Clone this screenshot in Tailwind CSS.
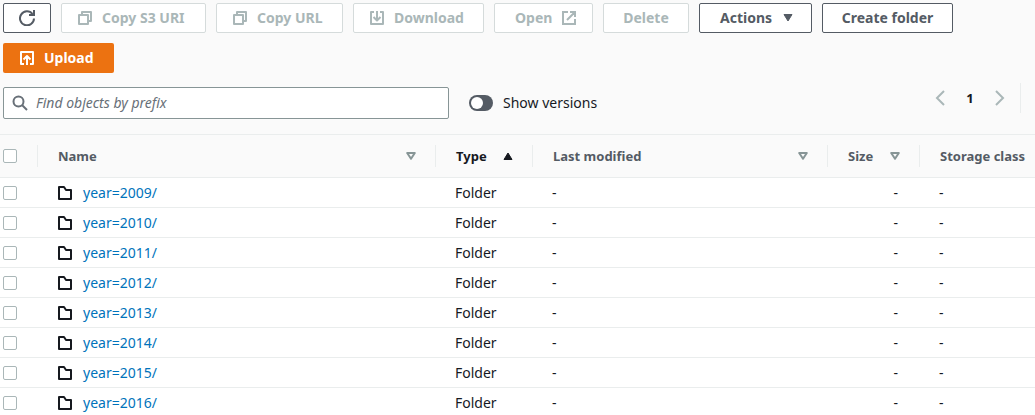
<!DOCTYPE html>
<html lang="en">
<head>
<meta charset="utf-8">
<meta name="viewport" content="width=device-width, initial-scale=1">
<title>Objects</title>
<script src="https://cdn.jsdelivr.net/npm/@tailwindcss/browser@4"></script>
</head>
<body class="bg-[#fafafa] font-['Noto_Sans','Open_Sans',sans-serif] text-sm text-[#16191f] overflow-hidden">
<svg class="hidden">
  <symbol id="copy" viewBox="0 0 16 16"><path d="M2 5h9v9H2zM5 5V2h9v9h-3" fill="none" stroke="currentColor" stroke-width="2" stroke-linejoin="round"/></symbol>
  <symbol id="folder" viewBox="0 0 16 16"><path d="M2 14V2h5l2 3h5v9z" fill="none" stroke="currentColor" stroke-width="2" stroke-linejoin="round"/></symbol>
  <symbol id="sort" viewBox="0 0 10 8"><path d="M1.200 1h7.600L5 6.800z" fill="none" stroke="currentColor" stroke-width="2" stroke-linejoin="round"/></symbol>
</svg>

<div class="flex flex-wrap gap-[10px] px-[3px] pt-[3px] text-sm font-bold">
  <button aria-label="Refresh" class="flex h-[30px] w-12 items-center justify-center rounded-xs border border-[#545b64] bg-white text-[#545b64]">
    <svg class="size-4" viewBox="0 0 16 16" fill="none" stroke="currentColor" stroke-width="2"><path d="M15 8.500A7 7 0 1 1 13.500 4"/><path d="M10 5h5V0"/></svg>
  </button>
  <button disabled class="flex h-[30px] w-[145px] items-center gap-[9px] rounded-xs border border-[#d5dbdb] bg-white pl-[15px] whitespace-nowrap text-[#aab7b8]"><svg class="size-4"><use href="#copy"/></svg>Copy S3 URI</button>
  <button disabled class="flex h-[30px] w-[127px] items-center gap-[9px] rounded-xs border border-[#d5dbdb] bg-white pl-[15px] whitespace-nowrap text-[#aab7b8]"><svg class="size-4"><use href="#copy"/></svg>Copy URL</button>
  <button disabled class="flex h-[30px] w-[131px] items-center gap-[9px] rounded-xs border border-[#d5dbdb] bg-white pl-[15px] text-[#aab7b8]">
    <svg class="size-4" viewBox="0 0 16 16" fill="none" stroke="currentColor" stroke-width="2"><path d="M5 2H2v12h12V2h-3M8 1v9M4.500 7L8 10.500 11.500 7" stroke-linejoin="round"/></svg>Download</button>
  <button disabled class="flex h-[30px] w-[99px] items-center justify-between rounded-xs border border-[#d5dbdb] bg-white pr-[15px] pl-5 text-[#aab7b8]">Open
    <svg class="size-4" viewBox="0 0 16 16" fill="none" stroke="currentColor" stroke-width="2"><path d="M7 2H2v12h12V9M9 2h5v5M14 2L6 10"/></svg></button>
  <button disabled class="flex h-[30px] w-[86px] items-center justify-center rounded-xs border border-[#d5dbdb] bg-white text-[#aab7b8]">Delete</button>
  <button class="flex h-[30px] w-[113px] items-center justify-between rounded-xs border border-[#545b64] bg-white pr-[18px] pl-5 text-[#545b64]">Actions
    <svg class="h-2 w-[10px]" viewBox="0 0 10 8"><path d="M1 .500h8L5 7z" fill="currentColor" stroke="currentColor" stroke-linejoin="round"/></svg></button>
  <button class="flex h-[30px] w-[131px] items-center justify-center rounded-xs border border-[#545b64] bg-white whitespace-nowrap text-[#545b64]">Create folder</button>
  <button class="flex h-[30px] w-[111px] items-center gap-[9px] rounded-xs bg-[#ec7211] pl-4 text-white">
    <svg class="size-4" viewBox="0 0 16 16" fill="none" stroke="currentColor" stroke-width="2"><path d="M5 14H2V2h12v12h-3M8 15V6M4.500 9.500L8 6l3.500 3.500" stroke-linejoin="round"/></svg>Upload</button>
</div>

<div class="flex items-start pt-[10px] pb-[15px] pl-[3px]">
  <label class="mt-1 flex h-8 w-[446px] items-center gap-2 rounded-xs border border-[#879596] bg-white px-2 text-[#687078]">
    <svg class="size-4 shrink-0" viewBox="0 0 16 16" fill="none" stroke="currentColor" stroke-width="2"><circle cx="6.500" cy="6.500" r="5"/><path d="M10 10l5 5"/></svg>
    <input type="text" aria-label="Find objects by prefix" placeholder="Find objects by prefix" class="min-w-0 grow text-sm italic outline-none placeholder:text-[#687078]">
  </label>
  <label class="mt-1 ml-5 flex h-8 items-center gap-[10px]">
    <input type="checkbox" role="switch" class="h-4 w-6 appearance-none rounded-full bg-[#545b64] before:m-[2px] before:block before:size-3 before:rounded-full before:bg-white checked:before:ml-[10px]">
    Show versions
  </label>
  <nav aria-label="Pagination" class="mr-[14px] ml-auto flex h-[30px] items-center border-r border-[#eaeded] pr-[11px] text-[#aab7b8]">
    <button disabled aria-label="Previous page" class="p-1"><svg class="h-4 w-[10px]" viewBox="0 0 10 16" fill="none" stroke="currentColor" stroke-width="2"><path d="M9 1L2 8l7 7"/></svg></button>
    <button aria-current="page" class="w-[42px] text-[13px] font-bold text-[#16191f]">1</button>
    <button disabled aria-label="Next page" class="p-1"><svg class="h-4 w-[10px]" viewBox="0 0 10 16" fill="none" stroke="currentColor" stroke-width="2"><path d="M1 1l7 7-7 7"/></svg></button>
  </nav>
</div>

<table class="w-full table-fixed border-collapse bg-white text-left">
  <colgroup><col class="w-[38px]"><col><col class="w-[97px]"><col class="w-[295px]"><col class="w-[92px]"><col class="w-[115px]"></colgroup>
  <thead class="bg-[#fafafa] text-[13px] text-[#545b64]">
    <tr class="h-[43px] border-y border-[#eaeded]">
      <th class="p-0"><div class="flex h-[22px] items-center border-r border-[#eaeded] pl-[3px]"><input type="checkbox" aria-label="Select all" class="size-[14px] appearance-none rounded-xs border border-[#aab7b8] bg-white checked:bg-[#0073bb]"></div></th>
      <th class="p-0"><div class="flex h-[22px] items-center justify-between border-r border-[#eaeded] pr-[19px] pl-5">Name<svg class="h-2 w-[10px] text-[#879596]"><use href="#sort"/></svg></div></th>
      <th class="p-0 text-[#16191f]" aria-sort="ascending"><div class="flex h-[22px] items-center justify-between border-r border-[#eaeded] pr-[19px] pl-5">Type<svg class="h-2 w-[10px]" viewBox="0 0 10 8"><path d="M1 7.500h8L5 1z" fill="currentColor" stroke="currentColor" stroke-linejoin="round"/></svg></div></th>
      <th class="p-0"><div class="flex h-[22px] items-center justify-between border-r border-[#eaeded] pr-[19px] pl-5">Last modified<svg class="h-2 w-[10px] text-[#879596]"><use href="#sort"/></svg></div></th>
      <th class="p-0"><div class="flex h-[22px] items-center justify-between border-r border-[#eaeded] pr-[19px] pl-5">Size<svg class="h-2 w-[10px] text-[#879596]"><use href="#sort"/></svg></div></th>
      <th class="p-0 pl-5 whitespace-nowrap">Storage class</th>
    </tr>
  </thead>
  <tbody id="rows"></tbody>
</table>
<template id="row">
  <tr class="h-[30px] border-b border-[#eaeded]">
    <td class="p-0 pl-[3px]"><input type="checkbox" class="block size-[14px] appearance-none rounded-xs border border-[#aab7b8] bg-white checked:bg-[#0073bb]"></td>
    <td class="p-0 pl-[19px]"><a href="#" class="flex items-center gap-[10px] text-[#0073bb]"><svg class="size-4 text-[#16191f]"><use href="#folder"/></svg><span></span></a></td>
    <td class="p-0 pl-[19px]">Folder</td>
    <td class="p-0 pl-[19px]">-</td>
    <td class="p-0 pr-[22px] text-right">-</td>
    <td class="p-0 pl-[19px]">-</td>
  </tr>
</template>
<script>
  for (let year = 2009; year <= 2016; year++) {
    const row = document.getElementById('row').content.cloneNode(true);
    row.querySelector('span').textContent = `year=${year}/`;
    row.querySelector('input').setAttribute('aria-label', `Select year=${year}/`);
    document.getElementById('rows').append(row);
  }
</script>
</body>
</html>
